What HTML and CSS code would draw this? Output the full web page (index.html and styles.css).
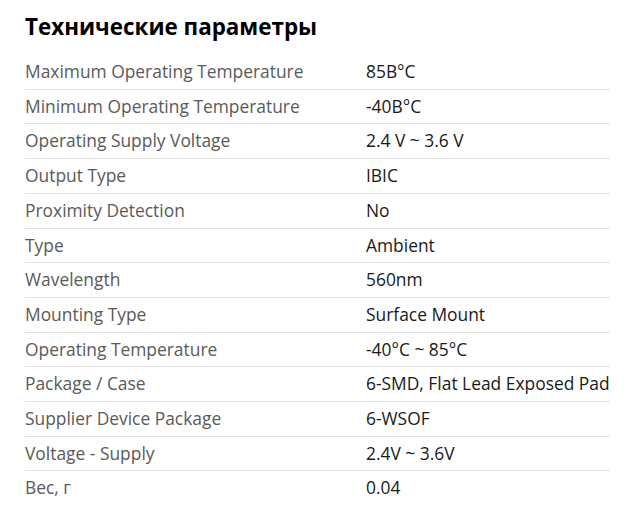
FILE: index.html
```html
<!DOCTYPE html>
<html lang="ru">
<head>
<meta charset="utf-8">
<link rel="stylesheet" href="styles.css">
</head>
<body>
<section class="specs">
  <h2 class="specs-title">Технические параметры</h2>
  <table class="specs-table">
    <tbody>
      <tr><td class="k">Maximum Operating Temperature</td><td class="v">85B°C</td></tr>
      <tr><td class="k">Minimum Operating Temperature</td><td class="v">-40B°C</td></tr>
      <tr><td class="k">Operating Supply Voltage</td><td class="v">2.4 V ~ 3.6 V</td></tr>
      <tr><td class="k">Output Type</td><td class="v">IBIC</td></tr>
      <tr><td class="k">Proximity Detection</td><td class="v">No</td></tr>
      <tr><td class="k">Type</td><td class="v">Ambient</td></tr>
      <tr><td class="k">Wavelength</td><td class="v">560nm</td></tr>
      <tr><td class="k">Mounting Type</td><td class="v">Surface Mount</td></tr>
      <tr><td class="k">Operating Temperature</td><td class="v">-40°C ~ 85°C</td></tr>
      <tr><td class="k">Package / Case</td><td class="v">6-SMD, Flat Lead Exposed Pad</td></tr>
      <tr><td class="k">Supplier Device Package</td><td class="v">6-WSOF</td></tr>
      <tr><td class="k">Voltage - Supply</td><td class="v">2.4V ~ 3.6V</td></tr>
      <tr><td class="k">Вес, г</td><td class="v">0.04</td></tr>
    </tbody>
  </table>
</section>
</body>
</html>
```
FILE: styles.css
```css
html, body {
  margin: 0;
  padding: 0;
  background: #fff;
}
body {
  font-family: "Open Sans", "Liberation Sans", sans-serif;
}
.specs {
  padding: 11px 32px 0 25px;
}
.specs-title {
  margin: 0 0 12px;
  font-size: 22.4px;
  font-weight: 700;
  line-height: 32px;
  color: #000;
}
.specs-table {
  width: 585px;
  border-collapse: collapse;
  font-size: 17.4px;
}
.specs-table td {
  padding: 4px 0;
  line-height: 25.7px;
  border-bottom: 1px solid #e2e2e2;
  vertical-align: middle;
}
.specs-table tr:last-child td {
  border-bottom: none;
}
.specs-table .k {
  width: 341px;
  color: #5a5a5a;
}
.specs-table .v {
  color: #1a1a1a;
}
```
